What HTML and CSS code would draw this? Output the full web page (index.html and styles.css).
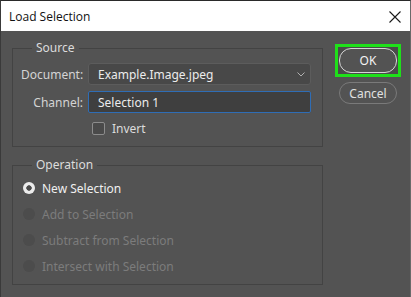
FILE: index.html
```html
<!DOCTYPE html>
<html lang="en">

<head>
    <meta charset="UTF-8">
    <meta name="viewport" content="width=device-width, initial-scale=1.0">
    <title>Load Selection</title>
    <link rel="stylesheet" href="styles.css">
</head>

<body>
    <div class="window">
        <div class="titlebar">
            <span class="title">Load Selection</span>
            <svg class="close" width="12" height="12" viewBox="0 0 12 12">
                <path d="M0.5 0.5 L11.5 11.5 M11.5 0.5 L0.5 11.5" stroke="#1a1a1a" stroke-width="1.1" fill="none" />
            </svg>
        </div>

        <div class="content">
            <div class="main">
                <fieldset class="group source">
                    <legend>Source</legend>
                    <div class="form-grid">
                        <label>Document:</label>
                        <div class="select">
                            <span>Example.Image.jpeg</span>
                            <svg width="8" height="5" viewBox="0 0 8 5">
                                <polyline points="0.5,0.5 4,4 7.5,0.5" stroke="#b0b0b0" stroke-width="1" fill="none" />
                            </svg>
                        </div>
                        <label>Channel:</label>
                        <div class="input">Selection 1</div>
                        <span></span>
                        <div class="check-row">
                            <span class="checkbox"></span>
                            <span>Invert</span>
                        </div>
                    </div>
                </fieldset>

                <fieldset class="group operation">
                    <legend>Operation</legend>
                    <div class="radio-row">
                        <span class="radio checked"></span>
                        <span>New Selection</span>
                    </div>
                    <div class="radio-row disabled">
                        <span class="radio"></span>
                        <span>Add to Selection</span>
                    </div>
                    <div class="radio-row disabled">
                        <span class="radio"></span>
                        <span>Subtract from Selection</span>
                    </div>
                    <div class="radio-row disabled">
                        <span class="radio"></span>
                        <span>Intersect with Selection</span>
                    </div>
                </fieldset>
            </div>

            <div class="buttons">
                <div class="ok-wrap">
                    <button class="btn ok">OK</button>
                </div>
                <button class="btn cancel">Cancel</button>
            </div>
        </div>
    </div>
</body>

</html>
```

FILE: styles.css
```css
body {
    margin: 0;
    font-family: "Noto Sans", "Open Sans", sans-serif;
    font-size: 12px;
    background: #2a2a2a;
}

.window {
    width: 411px;
    height: 297px;
    box-sizing: border-box;
    border-left: 1px solid #3a3a3a;
    border-right: 1px solid #6a6a6a;
    border-top: 1px solid #2a2a2a;
    background: #535353;
    display: flex;
    flex-direction: column;
}

.titlebar {
    height: 30px;
    background: #ffffff;
    display: flex;
    align-items: center;
    justify-content: space-between;
    padding: 0 9px 0 8px;
    color: #111;
    font-family: "Open Sans", sans-serif;
    font-size: 12px;
}

.close {
    margin-top: 1px;
}

.content {
    display: flex;
    padding-left: 11px;
}

.main {
    width: 311px;
}

.group {
    margin: 9px 0 0 0;
    padding: 0 11px 0 8px;
    border: 1px solid #434343;
    color: #d8d8d8;
}

.group legend {
    padding: 0 4px;
    margin-left: 11px;
    line-height: 16px;
    color: #dcdcdc;
}

.source {
    height: 107px;
    box-sizing: border-box;
}

.form-grid {
    display: grid;
    grid-template-columns: 62px 1fr;
    column-gap: 5px;
    row-gap: 6px;
    margin-top: 7px;
    align-items: center;
}

.form-grid label {
    text-align: right;
    color: #d4d4d4;
}

.select {
    height: 22px;
    box-sizing: border-box;
    background: #484848;
    border: 1px solid #5c5c5c;
    border-radius: 3px;
    display: flex;
    align-items: center;
    justify-content: space-between;
    padding: 0 5px 0 9px;
    color: #ececec;
}

.input {
    height: 22px;
    box-sizing: border-box;
    background: #3f3f3f;
    border: 1px solid #2f6db5;
    border-radius: 2px;
    display: flex;
    align-items: center;
    padding-left: 9px;
    color: #ececec;
}

.check-row {
    display: flex;
    align-items: center;
    gap: 7px;
    margin-top: 1px;
    padding-left: 4px;
    color: #dcdcdc;
}

.checkbox {
    width: 11px;
    height: 11px;
    border: 1px solid #8c8c8c;
    border-radius: 2px;
    background: #4a4a4a;
}

.operation {
    margin-top: 10px;
    height: 128px;
    box-sizing: border-box;
    padding-top: 7px;
}

.radio-row {
    display: flex;
    align-items: center;
    gap: 7px;
    height: 16px;
    margin-bottom: 10px;
    padding-left: 2px;
    color: #f0f0f0;
}

.radio-row.disabled {
    color: #7c7c7c;
}

.radio {
    width: 12px;
    height: 12px;
    border-radius: 50%;
    background: #4c4c4c;
}

.radio.checked {
    background: radial-gradient(circle, #4a4a4a 0, #4a4a4a 2.4px, #ececec 3px, #ececec 100%);
}

.buttons {
    display: flex;
    flex-direction: column;
    align-items: center;
    margin-left: 12px;
    padding-top: 13px;
    gap: 5px;
}

.ok-wrap {
    border: 3px solid #1fe01a;
    padding: 1px;
    background: #4a4a4a;
}

.btn {
    width: 58px;
    font-family: "Noto Sans", "Open Sans", sans-serif;
    font-size: 12px;
    background: #535353;
    border-radius: 12px;
    padding: 0;
    cursor: pointer;
}

.ok {
    height: 25px;
    border: 1px solid #d6d6d6;
    color: #f4f4f4;
}

.cancel {
    height: 22px;
    border: 1px solid #7a7a7a;
    color: #e0e0e0;
}
```
